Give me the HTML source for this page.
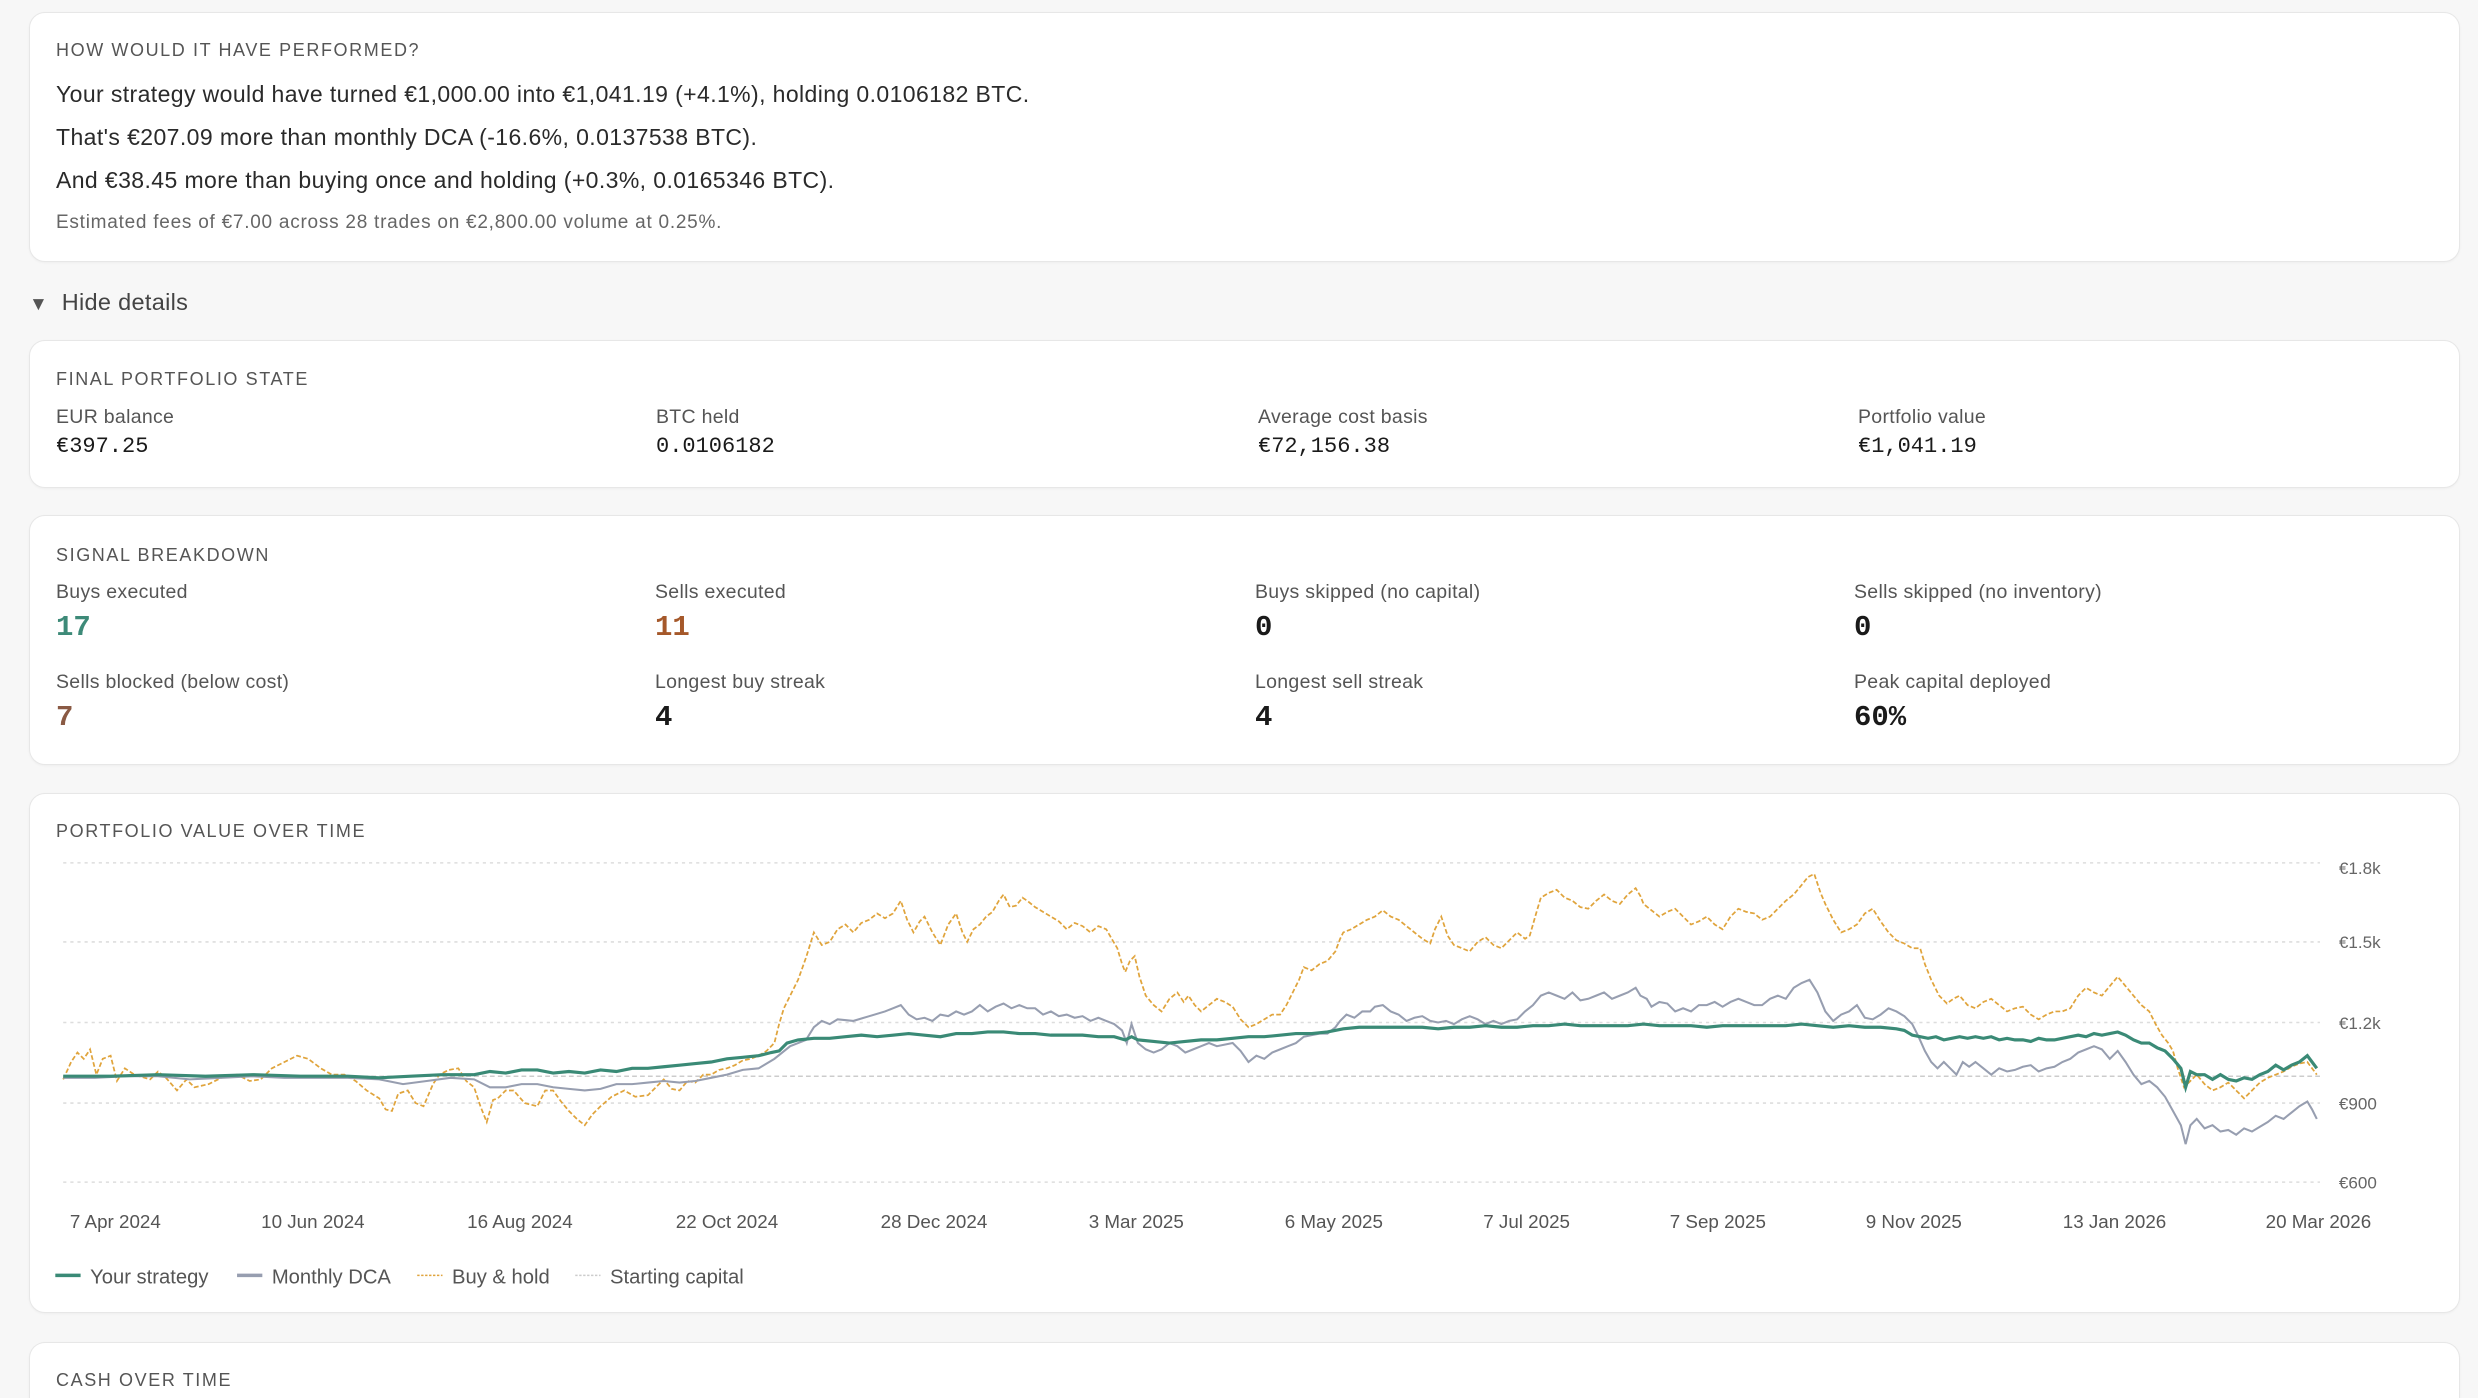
<!DOCTYPE html>
<html><head><meta charset="utf-8">
<style>
*{margin:0;padding:0;box-sizing:border-box}
html{height:1398px;overflow:hidden}
body{width:2478px;height:1398px;background:#f7f7f7;font-family:"Liberation Sans",sans-serif;position:relative;overflow:hidden;color:#222}
.card{position:absolute;left:29px;width:2431px;background:#fff;border:1.5px solid #e7e7e7;border-radius:16px;box-shadow:0 1px 2px rgba(0,0,0,.04)}
.t{position:absolute;white-space:nowrap}
.h{font-size:18px;letter-spacing:1.6px;color:#555;text-transform:uppercase}
.l{font-size:23px;letter-spacing:0.4px;color:#2a2a2a}
.lab{font-size:19.5px;letter-spacing:0.3px;color:#555}
.v{font-family:"Liberation Mono",monospace;font-size:22px;color:#1a1a1a}
.b{font-family:"Liberation Mono",monospace;font-size:29px;font-weight:bold;color:#1a1a1a}
</style></head><body>
<div class="card" style="top:12px;height:250px"></div>
<div class="t h" style="left:56px;top:40px">How would it have performed?</div>
<div class="t l" style="left:56px;top:81px">Your strategy would have turned €1,000.00 into €1,041.19 (+4.1%), holding 0.0106182 BTC.</div>
<div class="t l" style="left:56px;top:124px">That's €207.09 more than monthly DCA (-16.6%, 0.0137538 BTC).</div>
<div class="t l" style="left:56px;top:167px">And €38.45 more than buying once and holding (+0.3%, 0.0165346 BTC).</div>
<div class="t" style="left:56px;top:212px;font-size:19px;letter-spacing:0.75px;color:#666">Estimated fees of €7.00 across 28 trades on €2,800.00 volume at 0.25%.</div>

<div class="t" style="left:29px;top:289px;font-size:23.5px;letter-spacing:0.3px;color:#444"><span style="font-size:19px;color:#555">▼</span>&nbsp; Hide details</div>

<div class="card" style="top:340px;height:148px"></div>
<div class="t h" style="left:56px;top:369px">Final portfolio state</div>
<div class="t lab" style="left:56px;top:406px">EUR balance</div><div class="t v" style="left:56px;top:434px">€397.25</div>
<div class="t lab" style="left:656px;top:406px">BTC held</div><div class="t v" style="left:656px;top:434px">0.0106182</div>
<div class="t lab" style="left:1258px;top:406px">Average cost basis</div><div class="t v" style="left:1258px;top:434px">€72,156.38</div>
<div class="t lab" style="left:1858px;top:406px">Portfolio value</div><div class="t v" style="left:1858px;top:434px">€1,041.19</div>

<div class="card" style="top:515px;height:250px"></div>
<div class="t h" style="left:56px;top:545px">Signal breakdown</div>
<div class="t lab" style="left:56px;top:581px">Buys executed</div><div class="t b" style="left:56px;top:611px;color:#3d8a78">17</div>
<div class="t lab" style="left:655px;top:581px">Sells executed</div><div class="t b" style="left:655px;top:611px;color:#a5582a">11</div>
<div class="t lab" style="left:1255px;top:581px">Buys skipped (no capital)</div><div class="t b" style="left:1255px;top:611px">0</div>
<div class="t lab" style="left:1854px;top:581px">Sells skipped (no inventory)</div><div class="t b" style="left:1854px;top:611px">0</div>
<div class="t lab" style="left:56px;top:671px">Sells blocked (below cost)</div><div class="t b" style="left:56px;top:701px;color:#8a5a44">7</div>
<div class="t lab" style="left:655px;top:671px">Longest buy streak</div><div class="t b" style="left:655px;top:701px">4</div>
<div class="t lab" style="left:1255px;top:671px">Longest sell streak</div><div class="t b" style="left:1255px;top:701px">4</div>
<div class="t lab" style="left:1854px;top:671px">Peak capital deployed</div><div class="t b" style="left:1854px;top:701px">60%</div>

<div class="card" style="top:793px;height:520px"></div>
<div class="t h" style="left:56px;top:821px">Portfolio value over time</div>

<div class="card" style="top:1342px;height:56px;border-bottom:none;border-radius:16px 16px 0 0"></div>
<div class="t h" style="left:56px;top:1370px">Cash over time</div>

<svg style="position:absolute;left:0;top:0" width="2478" height="1398" viewBox="0 0 1568 884.6">
<g stroke="#ddd" stroke-width="1" stroke-dasharray="2 2.5">
<line x1="40" y1="546" x2="1468" y2="546"/><line x1="40" y1="596" x2="1468" y2="596"/>
<line x1="40" y1="647" x2="1468" y2="647"/><line x1="40" y1="698" x2="1468" y2="698"/>
<line x1="40" y1="748" x2="1468" y2="748"/>
</g>
<line x1="40" y1="681" x2="1468" y2="681" stroke="#ccc" stroke-width="1" stroke-dasharray="3 2"/>
<g font-family="Liberation Sans" font-size="10.8" fill="#666">
<text x="1480" y="553">€1.8k</text><text x="1480" y="600">€1.5k</text><text x="1480" y="651">€1.2k</text><text x="1480" y="702">€900</text><text x="1480" y="752">€600</text>
</g>
<g font-family="Liberation Sans" font-size="11.9" fill="#555" text-anchor="middle">
<text x="73" y="777">7 Apr 2024</text><text x="198" y="777">10 Jun 2024</text><text x="329" y="777">16 Aug 2024</text><text x="460" y="777">22 Oct 2024</text><text x="591" y="777">28 Dec 2024</text><text x="719" y="777">3 Mar 2025</text><text x="844" y="777">6 May 2025</text><text x="966" y="777">7 Jul 2025</text><text x="1087" y="777">7 Sep 2025</text><text x="1211" y="777">9 Nov 2025</text><text x="1338" y="777">13 Jan 2026</text><text x="1467" y="777">20 Mar 2026</text>
</g>
<polyline fill="none" stroke="#e0a43c" stroke-width="1.1" stroke-dasharray="3 1.5" points="40,683 45,672 49,666 53,670 57,664 61,680 65,670 70,668 74,684 79,676 85,680 95,683 100,678 105,682 112,690 118,683 123,688 132,686 142,681 150,680 158,684 165,683 172,676 180,672 188,668 195,670 203,676 210,680 218,680 225,684 232,690 240,695 244,702 248,703 252,692 258,690 263,698 268,700 274,686 278,680 284,677 290,676 295,684 300,688 304,700 308,710 312,696 315,695 320,690 325,690 332,698 340,700 345,690 350,690 355,697 360,703 365,708 370,712 375,705 380,700 387,694 395,690 402,694 410,693 415,688 420,683 425,689 430,690 435,684 440,685 445,680 450,680 455,677 460,676 465,674 470,671 475,670 480,668 485,665 490,660 493,648 496,638 500,630 505,620 510,606 515,590 520,598 525,596 530,588 535,585 540,590 545,584 550,582 555,578 560,581 565,578 570,570 574,582 578,590 582,583 585,580 590,590 595,598 600,585 605,578 609,590 612,596 616,588 620,585 624,580 628,577 632,570 635,566 639,574 643,573 647,568 650,570 655,574 660,577 665,580 670,583 675,588 680,584 685,586 690,590 695,586 700,588 704,595 707,600 710,610 712,615 715,608 718,605 721,618 725,630 730,636 735,640 740,632 745,628 749,634 752,630 756,636 760,640 765,636 770,632 775,634 780,637 785,645 790,650 795,648 800,645 805,642 810,642 814,636 818,628 822,620 825,612 830,614 835,610 840,608 845,602 848,594 850,590 855,588 860,585 865,582 870,580 875,576 880,580 885,582 890,586 895,590 900,594 905,597 908,588 912,580 916,592 920,598 925,600 930,602 935,596 940,593 945,598 950,600 955,595 960,590 965,594 968,592 972,578 975,568 980,565 985,563 990,568 995,570 1000,574 1005,575 1010,570 1015,566 1020,570 1025,572 1030,566 1035,562 1038,567 1040,572 1045,576 1050,580 1055,577 1060,575 1065,580 1070,585 1075,583 1080,580 1085,585 1090,588 1095,580 1100,575 1105,577 1110,578 1115,582 1120,580 1125,575 1130,570 1135,566 1140,560 1144,555 1148,553 1152,565 1155,572 1160,582 1165,590 1170,588 1175,585 1180,578 1185,575 1190,583 1195,590 1200,595 1205,597 1210,600 1215,600 1218,610 1222,620 1227,630 1232,635 1236,632 1240,630 1245,636 1250,638 1255,634 1260,632 1265,636 1270,640 1275,638 1280,637 1285,642 1290,645 1295,642 1300,640 1305,640 1310,638 1315,630 1320,625 1325,628 1330,630 1335,624 1340,618 1345,624 1350,630 1355,636 1360,640 1364,648 1368,655 1372,660 1375,665 1378,676 1382,688 1386,684 1390,680 1395,686 1400,690 1405,688 1410,685 1415,690 1420,695 1425,690 1430,685 1435,682 1440,680 1445,678 1450,675 1455,673 1460,672 1463,676 1466,680"/>
<polyline fill="none" stroke="#979eb0" stroke-width="1.3" points="40,682 60,682 80,681 100,681 120,683 140,682 160,681 180,682 200,682 220,682 240,683 255,686 270,684 285,682 300,683 310,688 320,688 330,686 340,686 350,688 360,689 370,690 380,689 390,686 400,686 410,685 420,684 430,685 440,684 450,682 460,680 470,677 480,676 490,670 500,662 505,660 510,658 515,650 520,646 525,648 530,645 540,646 550,643 560,640 565,638 570,636 575,642 580,645 585,644 590,646 595,642 600,643 605,640 610,642 615,640 620,636 625,640 630,637 635,635 640,638 645,636 650,638 655,638 660,642 665,640 670,643 675,642 680,644 685,643 690,646 695,644 700,646 705,648 710,652 713,660 716,648 720,660 725,664 730,666 735,664 740,660 745,662 750,666 755,664 760,662 765,660 770,662 780,660 785,665 790,672 795,668 800,670 805,666 810,664 815,662 820,660 825,656 830,655 835,654 840,654 845,650 848,646 852,642 857,644 862,640 867,640 870,637 875,636 880,640 885,642 890,646 895,644 900,643 905,646 910,647 915,646 920,648 925,645 930,643 935,645 940,648 945,646 950,648 955,646 960,645 965,640 970,636 975,630 980,628 985,630 990,632 995,628 1000,633 1005,632 1010,630 1015,628 1020,632 1025,630 1030,628 1035,625 1038,630 1042,632 1045,637 1050,634 1055,635 1060,640 1065,638 1070,640 1075,636 1080,636 1085,634 1090,637 1095,634 1100,632 1105,634 1110,636 1115,636 1120,632 1125,630 1130,632 1135,625 1140,622 1145,620 1150,628 1155,640 1160,646 1165,642 1170,640 1175,636 1180,644 1185,645 1190,642 1195,638 1200,640 1205,643 1210,648 1214,656 1218,665 1222,672 1226,676 1230,672 1234,676 1238,680 1242,672 1246,675 1250,672 1255,676 1260,680 1265,676 1270,678 1275,677 1280,675 1285,674 1290,678 1295,676 1300,675 1305,672 1310,670 1315,666 1320,664 1325,662 1330,664 1335,670 1340,665 1345,672 1350,680 1355,686 1360,684 1365,688 1370,694 1375,703 1380,712 1383,724 1386,712 1390,708 1395,714 1400,712 1405,716 1410,715 1415,718 1420,714 1425,716 1430,713 1435,710 1440,706 1445,708 1450,704 1455,700 1460,697 1463,702 1466,708"/>
<polyline fill="none" stroke="#3a8a76" stroke-width="2" points="40,681 70,681 100,680 130,681 160,680 190,681 220,681 240,682 260,681 280,680 300,680 310,678 320,679 330,677 340,677 350,679 360,678 370,679 380,677 390,678 400,676 410,676 420,675 430,674 440,673 450,672 460,670 470,669 480,668 488,666 493,665 498,660 505,658 515,657 525,657 535,656 545,655 555,656 565,655 575,654 585,655 595,656 605,654 615,654 625,653 635,653 645,654 655,654 665,655 675,655 685,655 695,656 705,656 712,658 716,656 720,658 730,659 740,660 750,659 760,658 770,658 780,657 790,656 800,656 810,655 820,654 830,654 840,653 850,651 860,650 870,650 880,650 890,650 900,650 910,651 920,650 930,650 940,649 950,650 960,650 970,649 980,649 990,648 1000,649 1010,649 1020,649 1030,649 1040,648 1050,649 1060,649 1070,649 1080,650 1090,649 1100,649 1110,649 1120,649 1130,649 1140,648 1150,649 1160,650 1170,649 1180,650 1190,650 1200,651 1205,652 1210,655 1215,656 1220,657 1225,656 1230,658 1235,657 1240,656 1245,657 1250,656 1255,657 1260,656 1265,658 1270,657 1275,658 1280,658 1285,659 1290,657 1295,658 1300,658 1305,657 1310,656 1315,655 1320,656 1325,654 1330,655 1335,654 1340,653 1345,655 1350,658 1355,660 1360,660 1365,663 1370,665 1375,670 1380,676 1383,688 1386,678 1390,680 1395,680 1400,683 1405,680 1410,683 1415,684 1420,682 1425,683 1430,680 1435,678 1440,674 1445,677 1450,674 1455,672 1460,668 1463,672 1466,676"/>
<g font-family="Liberation Sans" font-size="12.8" fill="#555">
<line x1="35" y1="807" x2="51" y2="807" stroke="#3a8a76" stroke-width="2.2"/><text x="57" y="812">Your strategy</text>
<line x1="150" y1="807" x2="166" y2="807" stroke="#979eb0" stroke-width="2.2"/><text x="172" y="812">Monthly DCA</text>
<line x1="264" y1="807" x2="280" y2="807" stroke="#e0a43c" stroke-width="1" stroke-dasharray="1.5 1"/><text x="286" y="812">Buy &amp; hold</text>
<line x1="364" y1="807" x2="380" y2="807" stroke="#ccc" stroke-width="1" stroke-dasharray="1.5 1"/><text x="386" y="812">Starting capital</text>
</g>
</svg>
</body></html>
